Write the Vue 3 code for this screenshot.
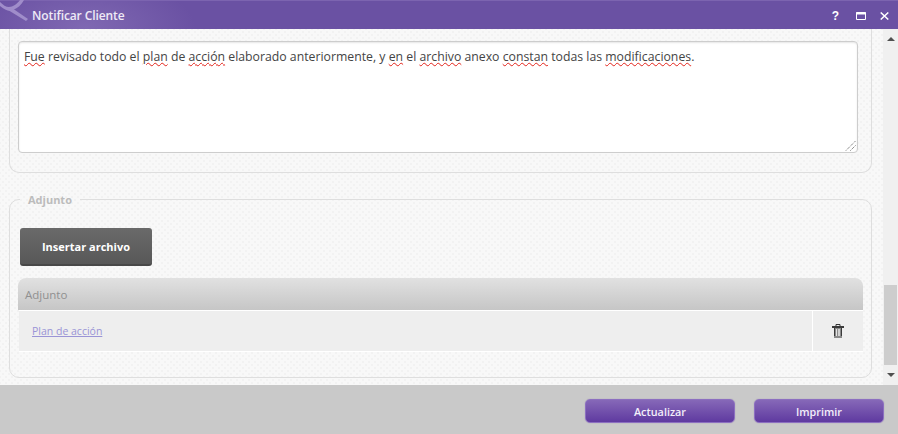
<script setup>
const segments = [
  { t: 'Fue', e: true }, { t: ' revisado todo el ' }, { t: 'plan', e: true }, { t: ' de ' },
  { t: 'acción', e: true }, { t: ' elaborado anteriormente, y ' }, { t: 'en', e: true }, { t: ' el ' },
  { t: 'archivo', e: true }, { t: ' anexo ' }, { t: 'constan', e: true }, { t: ' todas las ' },
  { t: 'modificaciones', e: true }, { t: '.' }
]
</script>

<template>
  <div class="window">
    <header class="titlebar">
      <svg class="logo" width="30" height="24" viewBox="0 0 30 24">
        <path d="M0 6 C5 10 9 12 13 10 C18 8 21 5 24 0 L20 0 C17 4 13 7 9 7 C6 7 3 5 0 2 Z" fill="#a08dca" />
        <path d="M8 10 L12 8 L28 19 L26 21 Z" fill="#a08dca" />
      </svg>
      <span class="title">Notificar Cliente</span>
      <div class="controls">
        <span class="help">?</span>
        <svg width="10" height="8" viewBox="0 0 10 8"><path d="M.5.5h9v7h-9z" fill="none" stroke="#fff"/><path d="M0 1.5h10" stroke="#fff" stroke-width="2"/></svg>
        <svg width="9" height="8" viewBox="0 0 9 8"><path d="M.7.5l7.6 7M8.3.5L.7 7.500" stroke="#fff" stroke-width="1.500" fill="none"/></svg>
      </div>
    </header>

    <div class="middle">
      <main class="content">
        <section class="card top-card">
          <div class="textbox">
            <template v-for="(s, i) in segments" :key="i"><span :class="{ spell: s.e }">{{ s.t }}</span></template>
            <svg class="grip" width="11" height="11" viewBox="0 0 11 11">
              <path d="M1 10.5 L10.5 1 M5.5 10.5 L10.5 5.5" stroke="#555" stroke-width="1" stroke-dasharray="1 1" fill="none"/>
            </svg>
          </div>
        </section>

        <fieldset class="card attach-card">
          <legend>Adjunto</legend>
          <button class="insert" type="button">Insertar archivo</button>
          <div class="table">
            <div class="thead">Adjunto</div>
            <div class="row">
              <div class="cell-name"><a class="file" href="#">Plan de acción</a></div>
              <div class="cell-action">
                <svg width="12" height="14" viewBox="0 0 12 14">
                  <path d="M4 2.500V.5h4v2" fill="none" stroke="#333" stroke-width="1"/>
                  <rect x="0" y="2" width="12" height="2" fill="#3a3a3a"/>
                  <rect x="2" y="4" width="8" height="10" fill="#8a8a8a"/>
                  <rect x="2" y="4" width="1" height="8" fill="#3a3a3a"/>
                  <rect x="9" y="4" width="1" height="8" fill="#3a3a3a"/>
                  <rect x="4" y="5" width="1" height="7" fill="#e4e4e4"/>
                  <rect x="6" y="5" width="2" height="7" fill="#d0d0d0"/>
                </svg>
              </div>
            </div>
          </div>
        </fieldset>
      </main>

      <aside class="scrollbar">
        <span class="arrow up"></span>
        <div class="track"><div class="thumb"></div></div>
        <span class="arrow down"></span>
      </aside>
    </div>

    <footer class="footer">
      <button class="action update" type="button">Actualizar</button>
      <button class="action print" type="button">Imprimir</button>
    </footer>
  </div>
</template>

<style>
html, body { margin: 0; padding: 0; }
</style>

<style scoped>
.window {
  width: 898px;
  height: 434px;
  display: flex;
  flex-direction: column;
  overflow: hidden;
  font-family: "Open Sans", "Noto Sans", sans-serif;
  background: #c9c9c9;
}
.titlebar {
  position: relative;
  flex: 0 0 29px;
  box-sizing: border-box;
  display: flex;
  align-items: center;
  padding: 1px 0 0 32px;
  color: #fff;
  background: radial-gradient(ellipse 110px 50px at 85px 26px, #7f68b2 0%, #6a51a3 100%);
  border-top: 1px solid #7c64b0;
}
.logo { position: absolute; left: 0; top: -1px; }
.title { font-size: 12px; font-weight: 600; color: #eee9f6; position: relative; letter-spacing: -0.1px; }
.controls {
  margin-left: auto;
  display: flex;
  align-items: center;
  padding-right: 9px;
}
.help { font-size: 12px; font-weight: 700; font-family: "Liberation Sans", sans-serif; line-height: 1; margin-right: 17px; }
.controls svg:last-child { margin-left: 14px; }
.middle { flex: 0 0 356px; display: flex; }
.content {
  flex: 0 0 883px;
  box-sizing: border-box;
  padding: 0 11px 0 9px;
  background-color: #f8f8f8;
  background-image:
    radial-gradient(circle, #f2f2f2 1px, transparent 1.2px),
    radial-gradient(circle, #f2f2f2 1px, transparent 1.2px);
  background-size: 6px 6px;
  background-position: 0 0, 3px 3px;
  display: flex;
  flex-direction: column;
  overflow: hidden;
}
.card {
  border: 1px solid #dedede;
  border-radius: 0 0 10px 10px;
  margin: 0;
}
.top-card {
  height: 144px;
  box-sizing: border-box;
  border-top: 0;
  padding: 12px 13px 0 8px;
}
.textbox {
  position: relative;
  height: 112px;
  box-sizing: border-box;
  background: #fff;
  border: 1px solid #cdcdcd;
  border-radius: 4px;
  padding: 6px 5px;
  font-size: 12.28px;
  line-height: 18px;
  color: #444;
  white-space: nowrap;
  box-shadow: inset 0 1px 2px #e6e6e6;
}
.spell {
  text-decoration: underline wavy #e2231a 1px;
  text-underline-offset: 1px;
}
.grip { position: absolute; right: 1px; bottom: 1px; }
.attach-card {
  margin-top: 19px;
  height: 186px;
  box-sizing: border-box;
  border-radius: 10px;
  padding: 21px 8px 0 8px;
  min-width: 0;
}
legend {
  margin-left: 2px;
  padding: 0 8px;
  font-size: 11px;
  font-weight: 700;
  color: #bcbcbc;
  line-height: 15px;
}
.insert {
  display: block;
  margin-left: 2px;
  width: 132px;
  height: 38px;
  border: 0;
  border-bottom: 2px solid #484848;
  border-radius: 3px;
  background: linear-gradient(#6a6a6a, #585858);
  color: #fff;
  font: 700 11px "Open Sans", sans-serif;
}
.table { margin-top: 12px; }
.thead {
  height: 32px;
  box-sizing: border-box;
  border-radius: 8px 8px 0 0;
  background: linear-gradient(#e1e1e1, #c6c6c6);
  color: #909090;
  font-size: 11.5px;
  line-height: 33px;
  padding-left: 7px;
}
.row {
  display: flex;
  height: 42px;
  box-sizing: border-box;
  border-bottom: 1px solid #fff;
  border-top: 1px solid #fff;
  margin-left: 1px;
}
.cell-name {
  flex: 1;
  background: #eeeeee;
  padding-left: 13px;
  display: flex;
  align-items: center;
}
.file { color: #9a94d6; font-size: 10.5px; text-decoration: underline; }
.cell-action {
  flex: 0 0 50px;
  border-left: 1px solid #fff;
  background: #eeeeee;
  display: flex;
  align-items: center;
  justify-content: center;
}
.scrollbar {
  flex: 0 0 15px;
  background: #f0f0f0;
  display: flex;
  flex-direction: column;
  align-items: center;
}
.arrow { width: 0; height: 0; border-left: 4px solid transparent; border-right: 4px solid transparent; }
.arrow.up { margin-top: 8px; border-bottom: 4px solid #505050; }
.arrow.down { margin-bottom: 8px; border-top: 4px solid #505050; }
.track { flex: 1; width: 100%; display: flex; flex-direction: column; justify-content: flex-end; padding-bottom: 8px; box-sizing: border-box; }
.thumb { height: 80px; margin: 0 1px; background: #cdcdcd; }
.footer {
  flex: 1;
  display: flex;
  justify-content: flex-end;
  gap: 19px;
  padding: 14px 14px 0 0;
}
.action {
  height: 24px;
  border: 1px solid #8c6fc0;
  border-radius: 5px;
  background: linear-gradient(#8668b8, #5f3aa0);
  color: #f3effa;
  font: 600 10.800px "Open Sans", sans-serif;
  padding: 0;
  box-shadow: 0 0 1px #8a78a8;
}
.update { width: 150px; }
.print { width: 130px; }
</style>
